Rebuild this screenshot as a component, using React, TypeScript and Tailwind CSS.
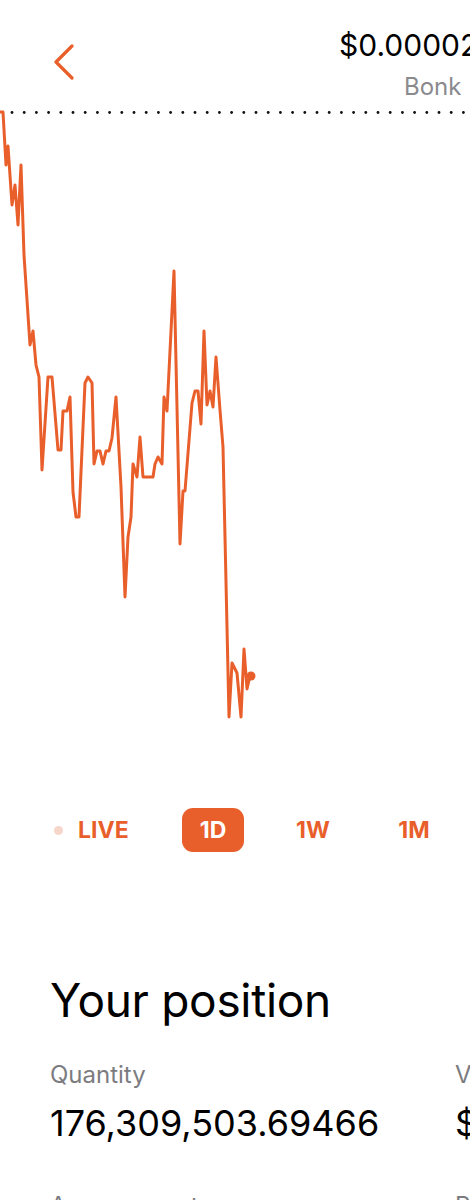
import React from "react";

const pts: [number, number][] = [
  [0, 112], [3, 112], [6, 165], [8, 146], [12, 205], [15, 185], [18, 225], [21, 165], [24, 255], [27, 300], [30, 345], [33, 331], [36, 365], [39, 377], [42, 470], [48, 377], [52, 377], [58, 450], [61, 450], [63, 411], [67, 411], [70, 397], [73, 492], [76, 517], [79, 517], [85, 383], [88, 377], [92, 383], [94, 464], [97, 451], [100, 451], [103, 464], [106, 451], [109, 451], [112, 438], [116, 397], [121, 487], [125, 597], [128, 537], [131, 517], [133, 464], [137, 477], [140, 437], [143, 477], [153, 477], [155, 464], [158, 457], [162, 464], [164, 397], [167, 411], [174, 271], [180, 544], [183, 491], [185, 491], [192, 403], [195, 391], [198, 391], [201, 424], [204, 331], [207, 405], [210, 391], [213, 407], [216, 357], [220, 410], [223, 447], [229, 717], [232, 663], [237, 673], [241, 717], [244, 649], [247, 689], [250, 676], [252, 676],
];

const ORANGE = "#e95f2b";

function Chart() {
  const dots: number[] = [];
  for (let x = 12; x < 470; x += 12.2) dots.push(x);
  return (
    <svg width={470} height={620} viewBox="0 105 470 620" className="block">
      {dots.map((x, i) => (
        <circle key={i} cx={x} cy={112.5} r={1.4} fill="#111" />
      ))}
      <polyline
        points={pts.map((p) => p.join(",")).join(" ")}
        fill="none"
        stroke={ORANGE}
        strokeWidth={3}
        strokeLinejoin="round"
        strokeLinecap="round"
      />
      <circle cx={251} cy={676} r={4.5} fill={ORANGE} />
    </svg>
  );
}

export default function App() {
  return (
    <div
      className="w-[470px] h-[1200px] overflow-hidden bg-white"
      style={{ fontFamily: "Inter, 'Noto Sans', sans-serif" }}
    >
      <div className="w-[720px]">
        {/* Header */}
        <div className="flex h-[105px]">
          <div className="w-[339px] pl-[53px] pt-[44px]">
            <svg width={22} height={36} viewBox="0 0 22 36" fill="none">
              <path d="M19 2 L3 18 L19 34" stroke={ORANGE} strokeWidth={3.2} strokeLinecap="round" strokeLinejoin="round" />
            </svg>
          </div>
          <div className="flex flex-col pt-[27px]">
            <div className="text-[30px] leading-[36px] text-black">$0.000023</div>
            <div className="ml-[65px] text-[24px] leading-[30px] mt-[9px] text-[#8a8a8e]">Bonk</div>
          </div>
        </div>

        <Chart />

        {/* Time range */}
        <div className="flex items-center h-[44px] mt-[83px] font-bold text-[23px]" style={{ color: ORANGE }}>
          <div className="flex items-center w-[163px] pl-[54px]">
            <span className="w-[9px] h-[9px] rounded-full bg-[#f6d6ca]" />
            <span className="ml-[15px]">LIVE</span>
          </div>
          <div className="w-[100px] flex justify-center">
            <span className="w-[62px] h-[44px] rounded-[11px] flex items-center justify-center text-white" style={{ backgroundColor: ORANGE }}>
              1D
            </span>
          </div>
          <div className="w-[100px] flex justify-center">1W</div>
          <div className="w-[102px] flex justify-center">1M</div>
          <div className="w-[100px] flex justify-center">1Y</div>
          <div className="w-[100px] flex justify-center">ALL</div>
        </div>

        {/* Position */}
        <div className="pl-[50px] mt-[120px]">
          <div className="text-[46px] leading-[56px] text-black tracking-[-0.3px]">Your position</div>
          <div className="flex mt-[32px]">
            <div className="w-[405px]">
              <div className="text-[24px] leading-[30px] text-[#7c7c80]">Quantity</div>
              <div className="text-[36px] leading-[44px] text-black mt-[11px]">176,309,503.69466</div>
            </div>
            <div>
              <div className="text-[24px] leading-[30px] text-[#7c7c80]">Value</div>
              <div className="text-[36px] leading-[44px] text-black mt-[11px]">$4,052.36</div>
            </div>
          </div>
          <div className="flex mt-[46px]">
            <div className="w-[405px] text-[24px] leading-[30px] text-[#7c7c80]">Average cost</div>
            <div className="text-[24px] leading-[30px] text-[#7c7c80]">Portfolio diversity</div>
          </div>
        </div>
      </div>
    </div>
  );
}
